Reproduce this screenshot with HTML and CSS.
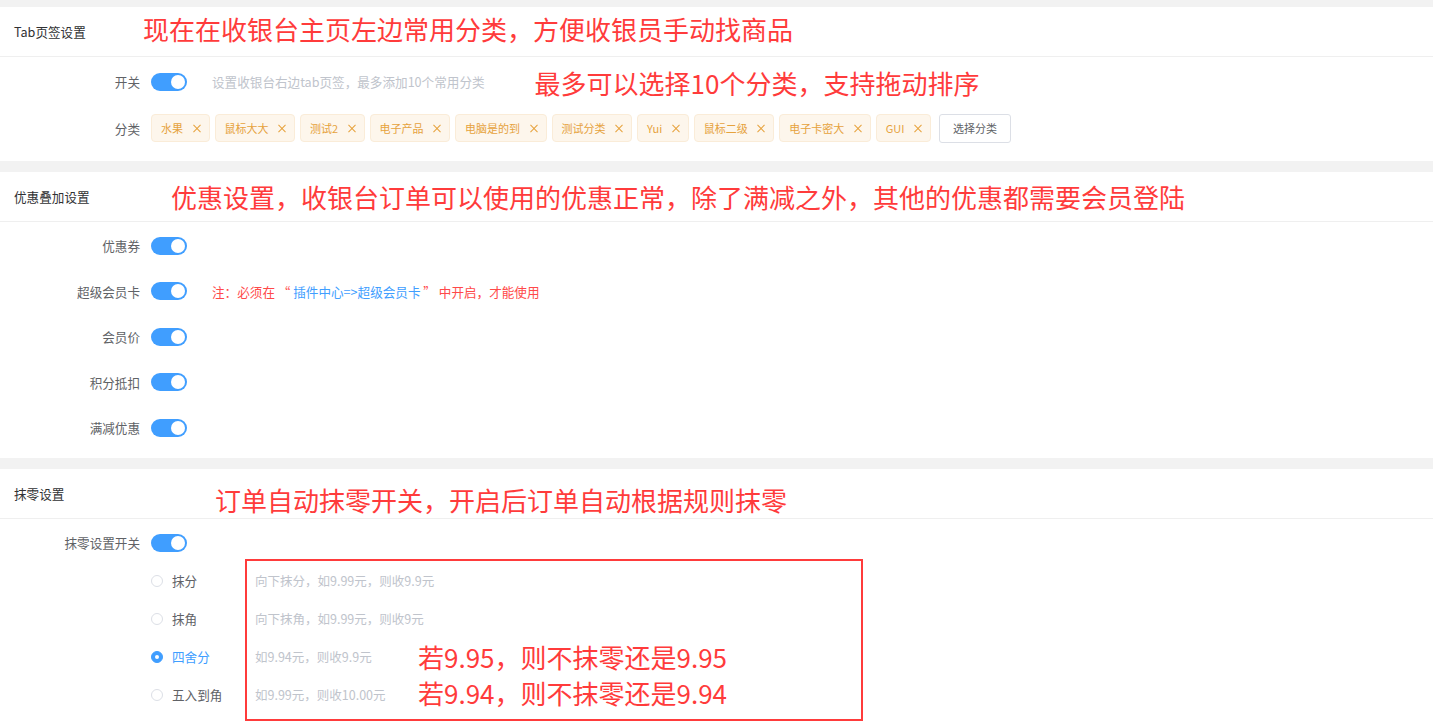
FILE: index.html
```html
<!DOCTYPE html>
<html lang="zh-CN">
<head>
    <meta charset="UTF-8">
    <meta name="viewport" content="width=device-width, initial-scale=1.0">
    <title>收银台设置</title>
    <link rel="stylesheet" href="styles.css">
</head>
<body>

    <!-- Tab页签设置 -->
    <section class="panel">
        <div class="panel-head">
            <span class="panel-title">Tab页签设置</span>
            <span class="callout callout-tab">现在在收银台主页左边常用分类，方便收银员手动找商品</span>
        </div>
        <div class="panel-body panel-body-tab">
            <div class="form-item">
                <label class="form-label">开关</label>
                <div class="form-content">
                    <span class="switch is-on"></span>
                    <span class="hint">设置收银台右边tab页签，最多添加10个常用分类</span>
                    <span class="callout-inline">最多可以选择10个分类，支持拖动排序</span>
                </div>
            </div>
            <div class="form-item">
                <label class="form-label">分类</label>
                <div class="form-content tag-list">
                    <span class="tag">水果<i class="tag-close"></i></span>
                    <span class="tag">鼠标大大<i class="tag-close"></i></span>
                    <span class="tag">测试2<i class="tag-close"></i></span>
                    <span class="tag">电子产品<i class="tag-close"></i></span>
                    <span class="tag">电脑是的到<i class="tag-close"></i></span>
                    <span class="tag">测试分类<i class="tag-close"></i></span>
                    <span class="tag">Yui<i class="tag-close"></i></span>
                    <span class="tag">鼠标二级<i class="tag-close"></i></span>
                    <span class="tag">电子卡密大<i class="tag-close"></i></span>
                    <span class="tag">GUI<i class="tag-close"></i></span>
                    <button class="btn-select">选择分类</button>
                </div>
            </div>
        </div>
    </section>

    <!-- 优惠叠加设置 -->
    <section class="panel">
        <div class="panel-head">
            <span class="panel-title">优惠叠加设置</span>
            <span class="callout callout-discount">优惠设置，收银台订单可以使用的优惠正常，除了满减之外，其他的优惠都需要会员登陆</span>
        </div>
        <div class="panel-body">
            <div class="form-item">
                <label class="form-label">优惠券</label>
                <div class="form-content"><span class="switch is-on"></span></div>
            </div>
            <div class="form-item">
                <label class="form-label">超级会员卡</label>
                <div class="form-content">
                    <span class="switch is-on"></span>
                    <span class="note">注：必须在 “ <a class="note-link">插件中心=&gt;超级会员卡</a> ” 中开启，才能使用</span>
                </div>
            </div>
            <div class="form-item">
                <label class="form-label">会员价</label>
                <div class="form-content"><span class="switch is-on"></span></div>
            </div>
            <div class="form-item">
                <label class="form-label">积分抵扣</label>
                <div class="form-content"><span class="switch is-on"></span></div>
            </div>
            <div class="form-item">
                <label class="form-label">满减优惠</label>
                <div class="form-content"><span class="switch is-on"></span></div>
            </div>
        </div>
    </section>

    <!-- 抹零设置 -->
    <section class="panel">
        <div class="panel-head">
            <span class="panel-title">抹零设置</span>
            <span class="callout callout-round">订单自动抹零开关，开启后订单自动根据规则抹零</span>
        </div>
        <div class="panel-body">
            <div class="form-item form-item-tight">
                <label class="form-label">抹零设置开关</label>
                <div class="form-content"><span class="switch is-on"></span></div>
            </div>
            <div class="form-item form-item-free">
                <label class="form-label"></label>
                <div class="radio-group">
                    <label class="radio"><span class="radio-dot"></span>抹分</label>
                    <span class="radio-desc">向下抹分，如9.99元，则收9.9元</span>
                    <span></span>

                    <label class="radio"><span class="radio-dot"></span>抹角</label>
                    <span class="radio-desc">向下抹角，如9.99元，则收9元</span>
                    <span></span>

                    <label class="radio is-checked"><span class="radio-dot"></span>四舍分</label>
                    <span class="radio-desc">如9.94元，则收9.9元</span>
                    <span class="callout-row">若9.95，则不抹零还是9.95</span>

                    <label class="radio"><span class="radio-dot"></span>五入到角</label>
                    <span class="radio-desc">如9.99元，则收10.00元</span>
                    <span class="callout-row callout-row-last">若9.94，则不抹零还是9.94</span>

                    <div class="mark-box"></div>
                </div>
            </div>
        </div>
    </section>

</body>
</html>
```

FILE: styles.css
```css
body {
    margin: 0;
    padding-top: 7px;
    background-color: #f2f2f2;
    font-family: "Noto Sans CJK SC", "Noto Sans", sans-serif;
    font-size: 12.6px;
    color: #606266;
    overflow: hidden;
}

/* Panels */
.panel {
    background-color: #fff;
    margin-bottom: 11px;
}

.panel-head {
    position: relative; /* for the red callouts */
    height: 49px;
    display: flex;
    align-items: center;
    padding-left: 14px;
    border-bottom: 1px solid #efefef;
}

.panel-title {
    color: #303133;
    font-size: 12.6px;
}

.panel-body {
    display: flow-root; /* keep the last row's margin inside the white panel */
    padding: 10px 0 0;
}

.panel-body-tab {
    padding-bottom: 2px;
}

/* Red annotations */
.callout,
.callout-inline,
.callout-row {
    color: #ff3b3b;
    font-size: 26px;
    line-height: 26px;
    white-space: nowrap;
}

.callout {
    position: absolute;
}

.callout-tab {
    left: 143px;
    top: 9px;
}

.callout-discount {
    left: 171px;
    top: 12px;
}

.callout-round {
    left: 215px;
    top: 18px;
}

.callout-inline {
    margin-left: 50px;
    margin-top: 3px;
}

/* Form rows */
.form-item {
    display: flex;
    align-items: center;
    min-height: 28px;
    margin-bottom: 17.5px;
}

.form-item:last-child {
    margin-bottom: 16px;
}

.form-item-tight {
    margin-bottom: 5px;
}

.form-item-free {
    align-items: flex-start;
}

.form-label {
    width: 140px;
    flex-shrink: 0;
    text-align: right;
    color: #606266;
}

.form-content {
    display: flex;
    align-items: center;
    margin-left: 11px;
}

/* Switch */
.switch {
    position: relative;
    display: inline-block;
    width: 36px;
    height: 18px;
    border-radius: 9px;
    background-color: #dcdfe6;
    flex-shrink: 0;
}

.switch::after {
    content: "";
    position: absolute;
    top: 2px;
    left: 2px;
    width: 14px;
    height: 14px;
    border-radius: 50%;
    background-color: #fff;
}

.switch.is-on {
    background-color: #409eff;
}

.switch.is-on::after {
    left: 20px;
}

.hint {
    margin-left: 25px;
    color: #c0c4cc;
}

.note {
    margin-left: 25px;
    color: #ff4949;
}

.note-link {
    color: #409eff;
    text-decoration: none;
}

/* Tags */
.tag-list {
    gap: 5px;
}

.tag {
    display: inline-flex;
    align-items: center;
    height: 28px;
    box-sizing: border-box;
    padding: 0 8px 0 9px;
    background-color: #fdf6ec;
    border: 1px solid #faecd8;
    border-radius: 4px;
    color: #e6a23c;
    font-size: 11px;
}

.tag-close {
    position: relative;
    width: 8px;
    height: 8px;
    margin-left: 9.5px;
}

.tag-close::before,
.tag-close::after {
    content: "";
    position: absolute;
    left: -1px;
    top: 3.5px;
    width: 10px;
    height: 1px;
    background-color: #e6a23c;
    transform: rotate(45deg);
}

.tag-close::after {
    transform: rotate(-45deg);
}

.btn-select {
    height: 29px;
    margin-left: 3px;
    padding: 0 13px;
    background-color: #fff;
    border: 1px solid #dcdfe6;
    border-radius: 3px;
    color: #606266;
    font-family: inherit;
    font-size: 11px;
}

/* Radio group */
.radio-group {
    position: relative;
    margin-left: 11px;
    display: grid;
    grid-template-columns: 104px 163px auto;
    grid-auto-rows: 38px;
    align-items: center;
    white-space: nowrap;
}

.radio {
    display: flex;
    align-items: center;
    color: #606266;
}

.radio-dot {
    position: relative;
    width: 12px;
    height: 12px;
    box-sizing: border-box;
    margin-right: 9px;
    border: 1px solid #dcdfe6;
    border-radius: 50%;
    background-color: #fff;
}

.radio.is-checked {
    color: #409eff;
}

.radio.is-checked .radio-dot {
    background-color: #409eff;
    border-color: #409eff;
}

.radio.is-checked .radio-dot::after {
    content: "";
    position: absolute;
    left: 3px;
    top: 3px;
    width: 4px;
    height: 4px;
    border-radius: 50%;
    background-color: #fff;
}

.radio-desc {
    color: #c0c4cc;
    font-size: 12.5px;
}

.callout-row {
    line-height: 38px;
}

.callout-row-last {
    margin-top: -3px;
}

.mark-box {
    position: absolute;
    left: 94px;
    top: -3px;
    width: 618px;
    height: 162px;
    box-sizing: border-box;
    border: 2px solid #ff3b3b;
    pointer-events: none;
}
```
